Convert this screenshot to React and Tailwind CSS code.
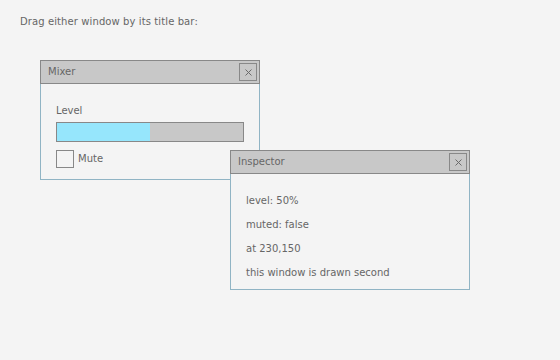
import { useState } from 'react'

function CloseButton() {
  return (
    <button className="w-[18px] h-[18px] border border-[#888] flex items-center justify-center">
      <svg width="7" height="7" viewBox="0 0 7 7">
        <path d="M0.5 0.5 L6.5 6.5 M6.5 0.5 L0.5 6.5" stroke="#6a6a6a" strokeWidth="1" />
      </svg>
    </button>
  )
}

function Window({ title, left, top, width, height, children }) {
  return (
    <div className="absolute flex flex-col" style={{ left, top, width, height }}>
      {/* Title bar */}
      <div className="h-[24px] shrink-0 bg-[#c8c8c8] border border-[#888] flex items-center justify-between pl-[7px] pr-[2px] cursor-move">
        <span>{title}</span>
        <CloseButton />
      </div>
      {/* Body */}
      <div className="flex-1 bg-[#f4f4f4] border border-t-0 border-[#90b4c4]">
        {children}
      </div>
    </div>
  )
}

export default function App() {
  const [level] = useState(50)
  const [muted, setMuted] = useState(false)

  return (
    <div
      className="relative min-h-[360px] bg-[#f4f4f4] text-[#666] text-[10px] leading-[12px]"
      style={{ fontFamily: '"DejaVu Sans", "Liberation Sans", sans-serif' }}
    >
      <p className="pl-[20px] pt-[16px] tracking-[0.1px]">Drag either window by its title bar:</p>

      <Window title="Mixer" left={40} top={60} width={220} height={120}>
        <div className="px-[15px] pt-[21px]">
          <div>Level</div>
          <div className="mt-[5px] h-[20px] border border-[#888] bg-[#c8c8c8]">
            <div className="h-full bg-[#96e6fc]" style={{ width: `${level}%` }} />
          </div>
          <label className="mt-[8px] flex items-center gap-[4px]">
            <span
              onClick={() => setMuted(!muted)}
              className="w-[18px] h-[18px] border border-[#888] bg-[#f4f4f4]"
            />
            <span>Mute</span>
          </label>
        </div>
      </Window>

      <Window title="Inspector" left={230} top={150} width={240} height={140}>
        <div className="px-[15px] pt-[15px] leading-[24px]">
          <div>level: {level}%</div>
          <div>muted: {muted ? 'true' : 'false'}</div>
          <div>at 230,150</div>
          <div>this window is drawn second</div>
        </div>
      </Window>
    </div>
  )
}
